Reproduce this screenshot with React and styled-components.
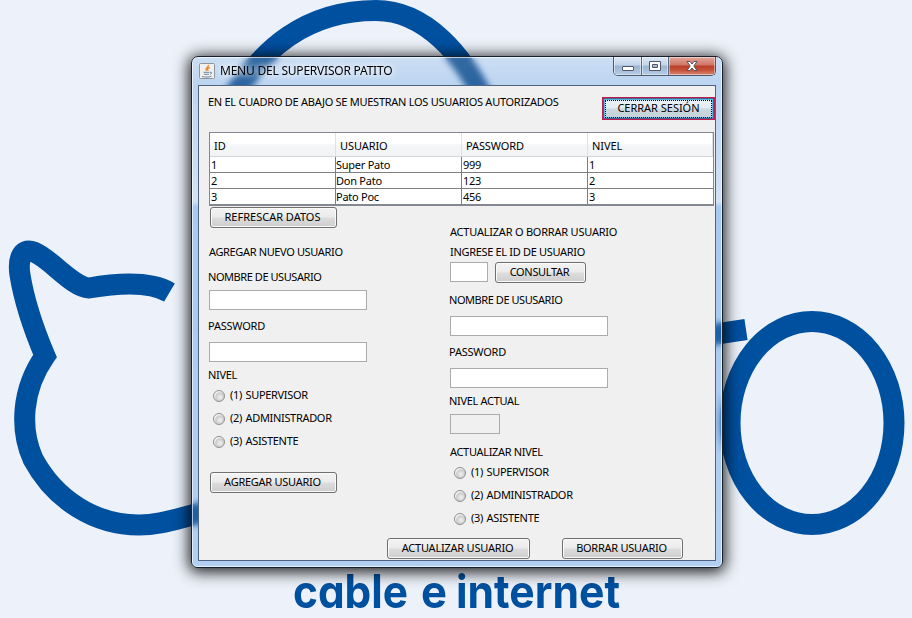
import React from "react";
import styled, { createGlobalStyle } from "styled-components";

const GlobalStyle = createGlobalStyle`
  body { margin: 0; background: #edf2fa; overflow: hidden; }
  * { box-sizing: border-box; }
`;

const Desktop = styled.main`
  display: grid;
  width: 912px;
  height: 618px;
  overflow: hidden;
  background: #edf2fa;
  & > * { grid-area: 1 / 1; }
`;

const Wallpaper = styled.svg`
  display: block;
  width: 912px;
  height: 618px;
`;

const Slogan = styled.text`
  font: 700 46px Inter, sans-serif;
  font-feature-settings: "cv11" 1;
  fill: #0050a0;
`;

const Window = styled.section`
  display: flex;
  flex-direction: column;
  width: 532px;
  height: 512px;
  margin: 56px 0 0 191px;
  padding: 0 6px 6px;
  border: 1px solid #17202c;
  border-radius: 7px 7px 6px 6px;
  background: linear-gradient(180deg, rgba(120, 175, 235, 0.3) 0, rgba(80, 150, 230, 0.32) 30px, rgba(110, 170, 230, 0.22) 145px, rgba(40, 130, 230, 0.36) 150px, rgba(50, 135, 230, 0.32) 100%);
  backdrop-filter: blur(3px) saturate(0.65);
  box-shadow: inset 0 0 0 1px rgba(255, 255, 255, 0.65), 0 2px 15px 2px rgba(0, 0, 0, 0.9);
`;

const TitleBar = styled.header`
  display: flex;
  flex: 0 0 28px;
  align-items: flex-start;
`;

const JavaIcon = styled.svg`
  width: 16px;
  height: 16px;
  margin: 6px 5px 0 1px;
`;

const Title = styled.h1`
  flex: 1;
  margin: 4px 0 0;
  font: 400 12px/19px "Noto Sans", sans-serif;
  letter-spacing: -0.22px;
  color: #000;
  white-space: nowrap;
  text-shadow: 0 0 5px #fff, 0 0 10px rgba(255, 255, 255, 0.8);
`;

const Controls = styled.div`
  display: flex;
  width: 103px;
  height: 19px;
  border: 1px solid #4c5b6d;
  border-top: 0;
  border-radius: 0 0 5px 5px;
  overflow: hidden;
`;

const Control = styled.button`
  display: grid;
  place-items: center;
  width: ${(p) => p.$width}px;
  height: 18px;
  padding: 0;
  border: 0;
  border-left: ${(p) => (p.$first ? 0 : "1px solid #5a6b7f")};
  background: ${(p) =>
    p.$danger
      ? "linear-gradient(#e3a79b 0, #cf7564 45%, #b93c28 50%, #c6553c 75%, #d98a76 100%)"
      : "linear-gradient(#dbe8f6 0, #c2d4ea 45%, #9db5d2 50%, #b4cbe5 100%)"};
  box-shadow: inset 0 0 0 1px rgba(255, 255, 255, 0.45);
  svg { display: block; }
`;

const Client = styled.div`
  display: flex;
  flex: 1;
  flex-direction: column;
  border: 1px solid #4f6480;
  background: #f0f0f0;
  font: 400 11px/16px "Noto Sans", sans-serif;
  color: #000;
`;

const TopRow = styled.div`
  display: flex;
  flex: 0 0 46px;
  align-items: flex-start;
  justify-content: space-between;
  padding: 10px 0 0 9px;
`;

const Label = styled.div`
  height: 16px;
  margin: ${(p) => p.$top || 0}px 0 0 ${(p) => p.$left || 0}px;
  line-height: 16px;
  letter-spacing: ${(p) => p.$spacing ?? -0.32}px;
  white-space: nowrap;
`;

const Button = styled.button`
  flex: none;
  width: ${(p) => p.$width}px;
  height: 21px;
  margin: ${(p) => p.$top || 0}px 0 0 ${(p) => p.$left || 0}px;
  padding: 0 2px 1px 0;
  border: 1px solid #707070;
  border-radius: 3px;
  background: linear-gradient(#f3f3f3 0, #ebebeb 48%, #dddddd 52%, #cdcdcd 100%);
  box-shadow: inset 0 0 0 1px #fafafa;
  font: inherit;
  line-height: 18px;
  letter-spacing: ${(p) => p.$spacing ?? -0.26}px;
  color: #000;
  white-space: nowrap;
`;

const LogoutButton = styled(Button)`
  height: 23px;
  margin-top: 1px;
  padding: 0;
  border: 1px solid #c01c50;
  border-radius: 0;
  background: linear-gradient(#eff4f8 0, #e2ebf1 48%, #ccd8e0 52%, #c6d2da 100%);
  box-shadow: inset 0 0 0 1px #4a5f8c, inset 0 0 0 2px #48bde6;
`;

const FocusRing = styled.span`
  display: block;
  height: 18px;
  margin: 0 2px;
  border: 1px dotted #000;
  line-height: 14px;
`;

const Table = styled.div`
  flex: 0 0 74px;
  width: 505px;
  margin-left: 10px;
  border: 1px solid #828790;
  border-bottom-width: 2px;
  background: #fff;
`;

const TableRow = styled.div`
  display: grid;
  grid-template-columns: 126px 126px 126px 1fr;
  height: ${(p) => (p.$last ? 15 : 16)}px;
  border-bottom: ${(p) => (p.$last ? 0 : "1px solid #7f7f7f")};
`;

const HeaderRow = styled(TableRow)`
  height: 24px;
  border-bottom: 1px solid #d5d5d5;
  background: linear-gradient(#fff 0, #fff 45%, #f5f6f8 52%, #f2f3f5 100%);
`;

const HeaderCell = styled.div`
  padding: 5px 0 0 4px;
  line-height: 16px;
  letter-spacing: -0.1px;
  border-right: 1px solid #dfe1e5;
`;

const Cell = styled.div`
  padding-left: ${(p) => (p.$first ? 1 : 0)}px;
  line-height: 15px;
  letter-spacing: -0.25px;
  border-right: 1px solid #7f7f7f;
  &:last-child { border-right: 0; }
`;

const Columns = styled.div`
  display: grid;
  flex: 0 0 332px;
  grid-template-columns: 241px 1fr;
  padding-left: 10px;
`;

const Column = styled.div`
  display: flex;
  flex-direction: column;
  align-items: flex-start;
`;

const Field = styled.input`
  display: block;
  flex: none;
  width: ${(p) => p.$width || 158}px;
  height: 20px;
  margin: ${(p) => p.$top || 0}px 0 0;
  padding: 0 3px;
  border: 1px solid #ababab;
  background: ${(p) => (p.$locked ? "#f0f0f0" : "#fff")};
  font: inherit;
`;

const SearchRow = styled.div`
  display: flex;
  height: 21px;
  margin-top: 2px;
`;

const RadioList = styled.div`
  margin-top: 1px;
  padding-left: 4px;
`;

const RadioOption = styled.label`
  display: flex;
  align-items: center;
  gap: 5px;
  height: 23px;
  line-height: 16px;
  letter-spacing: -0.32px;
  word-spacing: 1px;
  white-space: nowrap;
`;

const RadioDot = styled.span`
  width: 12px;
  height: 12px;
  margin-top: 1px;
  border: 1px solid #8e8f8f;
  border-radius: 50%;
  background: radial-gradient(circle at 60% 62%, #f0f0f0 0, #dcdcdc 30%, #c6c9cc 50%, #f4f4f4 64%);
`;

const OptionText = styled.span`
  margin-top: -1px;
`;

const Footer = styled.footer`
  display: flex;
  gap: 32px;
  padding-left: 188px;
`;

const rows = [
  ["1", "Super Pato", "999", "1"],
  ["2", "Don Pato", "123", "2"],
  ["3", "Pato Poc", "456", "3"],
];

const levels = ["(1) SUPERVISOR", "(2) ADMINISTRADOR", "(3) ASISTENTE"];

function Levels() {
  return (
    <RadioList>
      {levels.map((level) => (
        <RadioOption key={level}>
          <RadioDot />
          <OptionText>{level}</OptionText>
        </RadioOption>
      ))}
    </RadioList>
  );
}

function Background() {
  return (
    <Wallpaper viewBox="0 0 912 618">
      <g fill="none" stroke="#0050a0" strokeWidth="21" strokeMiterlimit="8">
        <path d="M232 98C262 50 305 10.500 376 10.500C425 10.500 464 55 486 104" />
        <path d="M169.500 292.500C150 281 118 283 89 288C72 287 50 258 34 252C20 247 18 262 20 275C24 300 34 330 45 356C21 390 20 430 33 459C55 500 95 525 139 525C160 525 175 519 205 512" />
        <path d="M690 338L746 329.500" />
        <ellipse cx="812" cy="423" rx="82" ry="101.500" />
      </g>
      <Slogan y="608">
        <tspan x="293" textLength="115" lengthAdjust="spacingAndGlyphs">cable</tspan>
        <tspan x="421" textLength="26" lengthAdjust="spacingAndGlyphs">e</tspan>
        <tspan x="456" textLength="164" lengthAdjust="spacingAndGlyphs">internet</tspan>
      </Slogan>
    </Wallpaper>
  );
}

export default function App() {
  return (
    <>
      <GlobalStyle />
      <Desktop>
        <Background />
        <Window>
          <TitleBar>
            <JavaIcon viewBox="0 0 16 16">
              <rect x=".5" y=".5" width="15" height="15" rx="1" fill="#f1f0ec" stroke="#8e959d" />
              <path d="M9.500 2C10 4 6 4.500 7.300 7.800M10.800 4.300C8.500 5.300 8.200 6.200 9 7.800" fill="none" stroke="#e8862c" strokeWidth="1.300" />
              <path d="M4.500 9.300h6M5 11.300h5M3 13.500c3 .8 7 .8 9.500-.3M11 9.300c2.300-.6 2.300 1.300 0 2" fill="none" stroke="#6d87a3" strokeWidth="1" />
            </JavaIcon>
            <Title>MENU DEL SUPERVISOR PATITO</Title>
            <Controls>
              <Control $width={27} $first aria-label="Minimizar">
                <svg width="14" height="12" viewBox="0 0 14 12">
                  <rect x="1.500" y="6.500" width="11" height="4" rx=".5" fill="#fff" stroke="#535666" />
                </svg>
              </Control>
              <Control $width={27} aria-label="Maximizar">
                <svg width="14" height="12" viewBox="0 0 14 12">
                  <path d="M1.500 1.500h11v9h-11zM4.500 4.500v3h5v-3z" fill="#fff" fillRule="evenodd" stroke="#535666" />
                </svg>
              </Control>
              <Control $width={47} $danger aria-label="Cerrar">
                <svg width="14" height="12" viewBox="0 0 14 12">
                  <path d="M2 1.500h3L7 4l2-2.500h3L8.800 6l3.200 4.500H9L7 8l-2 2.500H2L5.200 6z" fill="#fff" stroke="#535666" />
                </svg>
              </Control>
            </Controls>
          </TitleBar>
          <Client>
            <TopRow>
              <Label $top={-2} $spacing={-0.27}>EN EL CUADRO DE ABAJO SE MUESTRAN LOS USUARIOS AUTORIZADOS</Label>
              <LogoutButton $width={113} $spacing={-0.02}>
                <FocusRing>CERRAR SESIÓN</FocusRing>
              </LogoutButton>
            </TopRow>
            <Table>
              <HeaderRow>
                {["ID", "USUARIO", "PASSWORD", "NIVEL"].map((name) => (
                  <HeaderCell key={name}>{name}</HeaderCell>
                ))}
              </HeaderRow>
              {rows.map((row, index) => (
                <TableRow key={row[0]} $last={index === rows.length - 1}>
                  {row.map((value, column) => (
                    <Cell key={column} $first={column !== 1}>{value}</Cell>
                  ))}
                </TableRow>
              ))}
            </Table>
            <Columns>
              <Column>
                <Button $width={127} $top={1} $left={1} $spacing={0}>REFRESCAR DATOS</Button>
                <Label $top={16} $spacing={-0.36}>AGREGAR NUEVO USUARIO</Label>
                <Label $top={9} $left={-1} $spacing={-0.44}>NOMBRE DE USUSARIO</Label>
                <Field $top={5} />
                <Label $top={8} $left={-1} $spacing={-0.22}>PASSWORD</Label>
                <Field $top={8} />
                <Label $top={5} $left={-1}>NIVEL</Label>
                <Levels />
                <Button $width={127} $top={19} $left={1}>AGREGAR USUARIO</Button>
              </Column>
              <Column>
                <Label $top={18} $spacing={-0.22}>ACTUALIZAR O BORRAR USUARIO</Label>
                <Label $top={4}>INGRESE EL ID DE USUARIO</Label>
                <SearchRow>
                  <Field $width={38} />
                  <Button $width={91} $left={7} $spacing={-0.32}>CONSULTAR</Button>
                </SearchRow>
                <Label $top={9} $left={-1} $spacing={-0.44}>NOMBRE DE USUSARIO</Label>
                <Field $top={8} />
                <Label $top={8} $left={-1} $spacing={-0.22}>PASSWORD</Label>
                <Field $top={8} />
                <Label $top={5} $left={-1}>NIVEL ACTUAL</Label>
                <Field $top={5} $width={50} $locked readOnly />
                <Label $top={10}>ACTUALIZAR NIVEL</Label>
                <Levels />
              </Column>
            </Columns>
            <Footer>
              <Button $width={143} $spacing={-0.22}>ACTUALIZAR USUARIO</Button>
              <Button $width={121}>BORRAR USUARIO</Button>
            </Footer>
          </Client>
        </Window>
      </Desktop>
    </>
  );
}
